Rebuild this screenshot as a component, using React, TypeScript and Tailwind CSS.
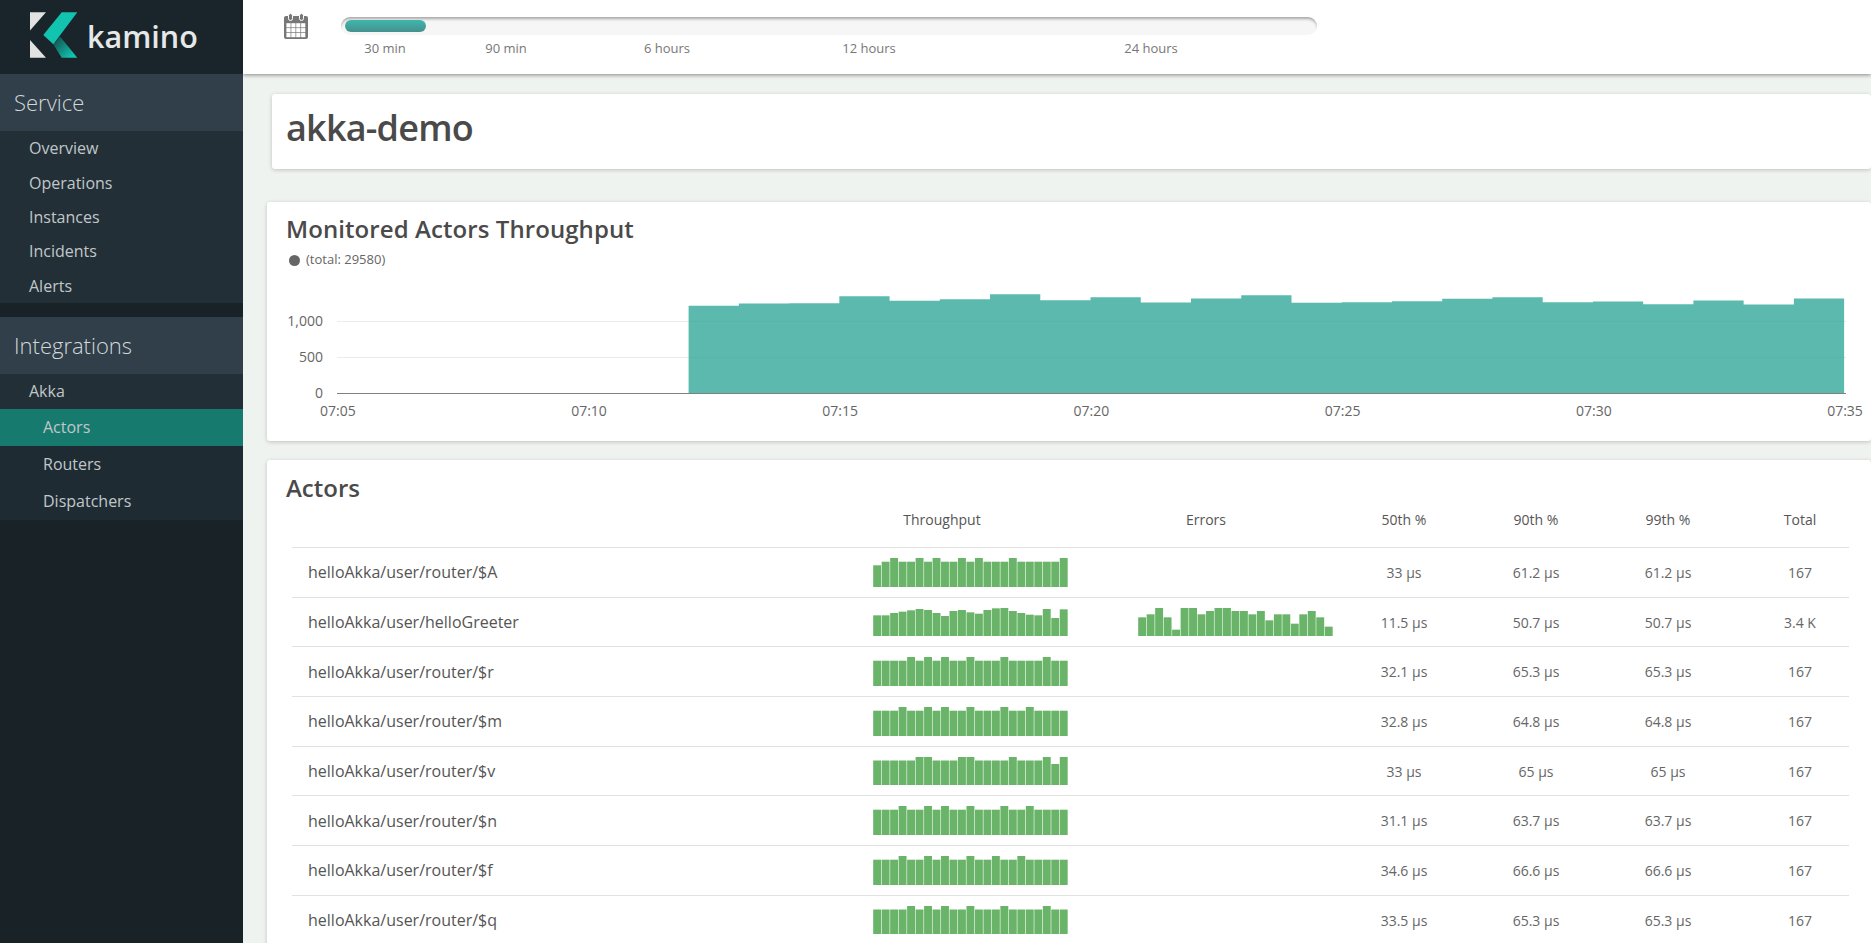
import React from "react";

const FONT = "font-['Open_Sans',sans-serif]";

const serviceItems = ["Overview", "Operations", "Instances", "Incidents", "Alerts"];

const chartHeights = [87.7, 90, 90.3, 97.3, 92.7, 94.3, 99.3, 93.3, 96.3, 91, 95, 98.3, 90.7, 91.3, 92.3, 94.7, 96.3, 91.3, 92, 89.3, 93, 89, 95];

function pattern(base: number, high: number, idx: number[], extra: Record<number, number> = {}) {
  return Array.from({ length: 23 }, (_, i) => (i in extra ? extra[i] : idx.includes(i) ? high : base));
}

const rows = [
  { name: "helloAkka/user/router/$A", t: pattern(25.3, 29, [2, 5, 7, 10, 12, 16, 22], { 0: 21.7 }), e: null as number[] | null, p50: "33 µs", p90: "61.2 µs", p99: "61.2 µs", total: "167" },
  {
    name: "helloAkka/user/helloGreeter",
    t: [346, 346, 339, 335, 331, 327, 330, 339, 348, 333, 330, 337, 341, 330, 325, 324, 333, 339, 344, 346, 327, 354, 328].map((v) => (408 - v) / 3),
    e: [352, 343, 324, 352, 389, 324, 324, 343, 333, 324, 324, 333, 333, 343, 333, 361, 343, 343, 371, 343, 333, 352, 380].map((v) => (408 - v) / 3),
    p50: "11.5 µs", p90: "50.7 µs", p99: "50.7 µs", total: "3.4 K",
  },
  { name: "helloAkka/user/router/$r", t: pattern(25.3, 29, [4, 6, 8, 11, 15, 20]), e: null, p50: "32.1 µs", p90: "65.3 µs", p99: "65.3 µs", total: "167" },
  { name: "helloAkka/user/router/$m", t: pattern(25.3, 29, [3, 6, 8, 11, 15, 18]), e: null, p50: "32.8 µs", p90: "64.8 µs", p99: "64.8 µs", total: "167" },
  { name: "helloAkka/user/router/$v", t: pattern(24.5, 28, [5, 6, 10, 11, 16, 20, 22], { 21: 21 }), e: null, p50: "33 µs", p90: "65 µs", p99: "65 µs", total: "167" },
  { name: "helloAkka/user/router/$n", t: pattern(25.3, 29, [3, 6, 8, 11, 15, 18]), e: null, p50: "31.1 µs", p90: "63.7 µs", p99: "63.7 µs", total: "167" },
  { name: "helloAkka/user/router/$f", t: pattern(25.3, 29, [3, 6, 8, 11, 14, 17]), e: null, p50: "34.6 µs", p90: "66.6 µs", p99: "66.6 µs", total: "167" },
  { name: "helloAkka/user/router/$q", t: pattern(24.5, 28, [4, 6, 8, 11, 15, 20]), e: null, p50: "33.5 µs", p90: "65.3 µs", p99: "65.3 µs", total: "167" },
];

function Logo() {
  return (
    <div className="flex items-start h-[74px]">
      <svg width="80" height="74" viewBox="0 0 80 74" className="block shrink-0">
        <defs>
          <linearGradient id="lg" x1="0.1" y1="0.1" x2="0.9" y2="0.8">
            <stop offset="0" stopColor="#14524f" />
            <stop offset="1" stopColor="#12c4b0" />
          </linearGradient>
        </defs>
        <polygon points="30,12.3 46,12.3 30,30.5" fill="#e2e2e2" />
        <polygon points="30,40 46,57.7 30,57.7" fill="#e2e2e2" />
        <polygon points="53.3,44.3 60,36.5 77.3,57.7 61.7,57.7" fill="url(#lg)" />
        <polygon points="61.7,12.3 77.3,12.3 53.3,44.3 43.3,35" fill="#12c4b0" />
      </svg>
      <span className="ml-[7px] mt-[13.5px] text-[30.5px] leading-[44px] font-semibold text-[#e6e8e8] font-['Open_Sans',sans-serif]">
        kamino
      </span>
    </div>
  );
}

function Sidebar() {
  return (
    <aside className="w-[243px] shrink-0 h-full bg-[#182227] flex flex-col text-[#c0c7ca]">
      <div className="bg-[#1a252b]">
        <Logo />
      </div>
      <div className="h-[57px] bg-[#303f49] flex items-center pl-[14px] text-[22px] font-light text-[#d2d7da]">Service</div>
      <div className="bg-[#232f36]">
        {serviceItems.map((s) => (
          <div key={s} className="h-[34.35px] flex items-center pl-[29px] text-[16px]">
            {s}
          </div>
        ))}
      </div>
      <div className="h-[14.25px] shrink-0" />
      <div className="h-[57px] bg-[#303f49] flex items-center pl-[14px] text-[22px] font-light text-[#d2d7da]">Integrations</div>
      <div className="h-[35px] bg-[#232f36] flex items-center pl-[29px] text-[16px]">Akka</div>
      <div className="h-[37px] bg-[#177a6e] flex items-center pl-[43px] text-[16px]">Actors</div>
      <div className="bg-[#1f2b33]">
        <div className="h-[37px] flex items-center pl-[43px] text-[16px]">Routers</div>
        <div className="h-[37px] flex items-center pl-[43px] text-[16px]">Dispatchers</div>
      </div>
    </aside>
  );
}

function CalendarIcon() {
  const cells: React.ReactNode[] = [];
  for (let j = 0; j < 3; j++) {
    for (let i = 0; i < 4; i++) {
      cells.push(<rect key={`${i}-${j}`} x={2.4 + i * 4.9} y={10.2 + j * 4.9} width={4.2} height={4.2} fill="#ffffff" />);
    }
  }
  return (
    <svg width="24" height="26" viewBox="0 0 24 26" className="block shrink-0">
      <rect x="0" y="3" width="24" height="23" rx="2" fill="#777777" />
      {cells}
      <rect x="4.5" y="0.5" width="4" height="7" rx="2" fill="#777777" stroke="#ffffff" strokeWidth="1" />
      <rect x="15.5" y="0.5" width="4" height="7" rx="2" fill="#777777" stroke="#ffffff" strokeWidth="1" />
    </svg>
  );
}

function TopBar() {
  return (
    <header className="relative h-[74px] shrink-0 bg-white shadow-[0_1px_4px_rgba(0,0,0,0.45)] flex items-start pl-[41px] pt-[13px]">
      <CalendarIcon />
      <div className="ml-[33px] mt-[4px] w-[976px]">
        <div className="h-[18px] rounded-[9px] bg-[#f6f6f6] shadow-[inset_0_3px_3px_-1px_rgba(0,0,0,0.32)] pl-[4px] pt-[3px]">
          <div className="h-[12px] w-[81px] rounded-[6px] bg-gradient-to-b from-[#3db7ac] to-[#45918e]" />
        </div>
        <div className="flex pl-[4px] mt-[4px] text-[13px] leading-[18px] text-[#777777]">
          <div className="w-[80px] text-center">30 min</div>
          <div className="w-[80px] text-center ml-[41px]">90 min</div>
          <div className="w-[80px] text-center ml-[81px]">6 hours</div>
          <div className="w-[80px] text-center ml-[122px]">12 hours</div>
          <div className="w-[80px] text-center ml-[202px]">24 hours</div>
        </div>
      </div>
    </header>
  );
}

function ThroughputChart() {
  const baseY = 125.5;
  const startX = 421.6;
  const step = 50.24;
  let d = `M${startX} ${baseY}`;
  chartHeights.forEach((h, i) => {
    const x = startX + i * step;
    d += ` L${x} ${baseY - h} L${x + step} ${baseY - h}`;
  });
  d += ` L${startX + chartHeights.length * step} ${baseY} Z`;
  const xLabels = ["07:05", "07:10", "07:15", "07:20", "07:25", "07:30", "07:35"];
  return (
    <svg width="1604" height="172" viewBox="0 0 1604 172" className="block">
      <line x1="70" x2="1579" y1="53.5" y2="53.5" stroke="#ececec" />
      <line x1="70" x2="1579" y1="89.5" y2="89.5" stroke="#ececec" />
      <path d={d} fill="#33a79a" fillOpacity="0.8" />
      <line x1="70" x2="1579" y1={baseY} y2={baseY} stroke="#808080" />
      {[["1,000", 58], ["500", 94], ["0", 130]].map(([t, y]) => (
        <text key={t as string} x="56" y={y as number} textAnchor="end" fontSize="14" fill="#666666" fontFamily="'Open Sans', sans-serif">
          {t}
        </text>
      ))}
      {xLabels.map((t, i) => (
        <text key={t} x={70.8 + i * 251.2} y="148" textAnchor="middle" fontSize="14" fill="#666666" fontFamily="'Open Sans', sans-serif">
          {t}
        </text>
      ))}
    </svg>
  );
}

function Spark({ values }: { values: number[] }) {
  return (
    <svg width="195" height="30" viewBox="0 0 195 30" className="block">
      {values.map((h, i) => (
        <rect key={i} x={i * 8.48 + 0.2} y={30 - h} width={7.9} height={h} fill="#69b469" />
      ))}
    </svg>
  );
}

const GRID = "grid grid-cols-[581px_265px_200px_132px_132px_132px_115px]";

function ActorsTable() {
  return (
    <div className="w-[1557px]">
      <div className={`${GRID} h-[43px] pb-[13px] items-center text-[14px] font-medium text-[#555555]`}>
        <div />
        <div className="w-[138px] text-center">Throughput</div>
        <div className="w-[136px] text-center">Errors</div>
        <div className="text-center">50th %</div>
        <div className="text-center">90th %</div>
        <div className="text-center">99th %</div>
        <div className="text-center pl-[17px]">Total</div>
      </div>
      {rows.map((r) => (
        <div key={r.name} className={`${GRID} h-[49.68px] items-center border-t border-[#e2e2e2] text-[14px] text-[#666666]`}>
          <div className="pl-[16px] text-[16px] text-[#555555]">{r.name}</div>
          <div className="self-end mb-[10px]">
            <Spark values={r.t} />
          </div>
          <div className="self-end mb-[10px]">{r.e ? <Spark values={r.e} /> : null}</div>
          <div className="text-center">{r.p50}</div>
          <div className="text-center">{r.p90}</div>
          <div className="text-center">{r.p99}</div>
          <div className="text-center pl-[17px]">{r.total}</div>
        </div>
      ))}
    </div>
  );
}

export default function App() {
  return (
    <div className={`flex h-[943px] w-[1871px] overflow-hidden bg-[#eff3f0] ${FONT}`}>
      <Sidebar />
      <main className="flex-1 min-w-0 flex flex-col overflow-hidden">
        <TopBar />
        <div className="pl-[24px] flex flex-col">
          <section className="ml-[5px] mt-[20px] h-[75px] shrink-0 bg-white rounded-[3px] shadow-[0_1px_4px_rgba(0,0,0,0.2)] pl-[14px] flex items-center">
            <h1 className="mb-[8px] text-[36px] leading-[48px] tracking-[-0.8px] font-semibold text-[#4a4a4a]">akka-demo</h1>
          </section>
          <section className="mt-[33px] h-[239px] shrink-0 bg-white rounded-[3px] shadow-[0_1px_4px_rgba(0,0,0,0.2)] pt-[11px]">
            <h2 className="pl-[19px] text-[24px] leading-[32px] tracking-[0.08px] font-semibold text-[#4a4a4a]">Monitored Actors Throughput</h2>
            <div className="pl-[22px] mt-[6px] mb-[-1px] h-[18px] flex items-center text-[13px] text-[#666666]">
              <span className="w-[11px] h-[11px] rounded-full bg-[#666666]" />
              <span className="ml-[6px]">(total: 29580)</span>
            </div>
            <ThroughputChart />
          </section>
          <section className="mt-[19px] shrink-0 bg-white rounded-[3px] shadow-[0_1px_4px_rgba(0,0,0,0.2)] pt-[12px] pl-[25px] pb-[10px]">
            <h2 className="-ml-[6px] text-[24px] leading-[32px] font-semibold text-[#4a4a4a]">Actors</h2>
            <ActorsTable />
          </section>
        </div>
      </main>
    </div>
  );
}
